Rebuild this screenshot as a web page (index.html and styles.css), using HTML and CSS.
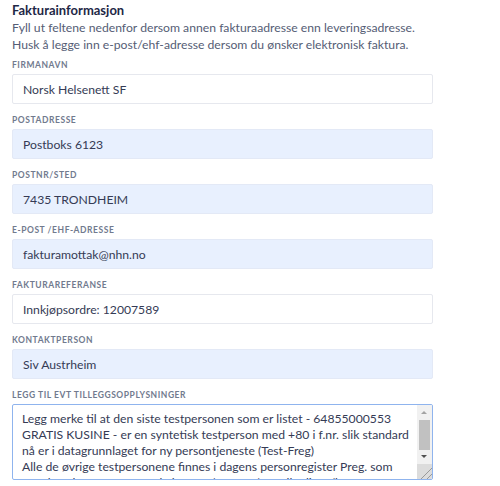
FILE: index.html
```html
<!DOCTYPE html>
<html lang="no">
<head>
<meta charset="utf-8">
<link rel="stylesheet" href="styles.css">
</head>
<body>
<div class="page">
  <h2 class="title">Fakturainformasjon</h2>
  <p class="desc">Fyll ut feltene nedenfor dersom annen fakturaadresse enn leveringsadresse.<br>Husk å legge inn e-post/ehf-adresse dersom du ønsker elektronisk faktura.</p>
  <div class="fields">
    <div class="field">
      <label class="label">Firmanavn</label>
      <div class="input">Norsk Helsenett SF</div>
    </div>
    <div class="field">
      <label class="label">Postadresse</label>
      <div class="input filled">Postboks 6123</div>
    </div>
    <div class="field">
      <label class="label">Postnr/sted</label>
      <div class="input filled">7435 TRONDHEIM</div>
    </div>
    <div class="field">
      <label class="label">E-post /EHF-adresse</label>
      <div class="input filled">fakturamottak@nhn.no</div>
    </div>
    <div class="field">
      <label class="label">Fakturareferanse</label>
      <div class="input">Innkjøpsordre: 12007589</div>
    </div>
    <div class="field">
      <label class="label">Kontaktperson</label>
      <div class="input filled">Siv Austrheim</div>
    </div>
    <div class="field">
      <label class="label">Legg til evt tilleggsopplysninger</label>
      <div class="textarea">
        <div class="ta-text">Legg merke til at den siste testpersonen som er listet - 64855000553 GRATIS KUSINE - er en syntetisk testperson med +80 i f.nr. slik standard nå er i datagrunnlaget for ny persontjeneste (Test-Freg)<br>Alle de øvrige testpersonene finnes i dagens personregister Preg. som Norsk Helsenett fortsatt skal støtte (og teste) og alle disse (bortsett fra den siste) er hentet fra testdatasettet.</div>
        <div class="scrollbar">
          <div class="sb-up"></div>
          <div class="sb-track"><div class="sb-thumb"></div></div>
          <div class="sb-down"></div>
          <div class="sb-corner"></div>
        </div>
      </div>
    </div>
  </div>
</div>
</body>
</html>
```

FILE: styles.css
```css
* { box-sizing: border-box; }
html, body { margin: 0; padding: 0; background: #fff; }
body { font-family: Lato, "Noto Sans", sans-serif; width: 500px; height: 486px; overflow: hidden; }
.page { padding: 2px 0 0 12px; width: 445px; }
.title { margin: 0; font-size: 13px; line-height: 17px; font-weight: 700; color: #1e2746; }
.desc { margin: 0 0 5px; font-size: 12.2px; line-height: 17px; color: #555d75; }
.fields { display: flex; flex-direction: column; gap: 9px; }
.field { display: flex; flex-direction: column; gap: 2px; }
.label { font-size: 8.5px; line-height: 14px; font-weight: 700; text-transform: uppercase; color: #717a8e; letter-spacing: 0.55px; }
.input { height: 30px; width: 421px; border: 1px solid #e6e8ee; border-radius: 2px; background: #fff; padding: 0 9px 0 10px; display: flex; align-items: center; font-size: 12.2px; color: #353b55; }
.input.filled { background: #e8f0fe; border-color: #e3e9f6; }
.textarea { position: relative; width: 421px; height: 76px; border: 1px solid #8fb4ee; border-radius: 2px; overflow: hidden; background: #fff; }
.ta-text { padding: 6px 18px 0 9px; font-size: 12.2px; line-height: 16px; color: #353b55; }
.scrollbar { position: absolute; right: 0; top: 0; bottom: 0; width: 15px; background: #f1f1f1; display: flex; flex-direction: column; }
.sb-up, .sb-down { height: 15px; position: relative; }
.sb-up::after { content: ""; position: absolute; left: 4px; top: 6px; border-left: 3.5px solid transparent; border-right: 3.5px solid transparent; border-bottom: 3.5px solid #a3a3a3; }
.sb-down::after { content: ""; position: absolute; left: 4px; top: 5px; border-left: 3.5px solid transparent; border-right: 3.5px solid transparent; border-top: 3.5px solid #505050; }
.sb-track { flex: 1; padding: 0 2px; }
.sb-thumb { height: 30px; background: #c1c1c1; }
.sb-corner { height: 15px; background: #dcdcdc linear-gradient(135deg, transparent 60%, #999 60%, #999 66%, transparent 66%, transparent 80%, #999 80%, #999 86%, transparent 86%); }
```
